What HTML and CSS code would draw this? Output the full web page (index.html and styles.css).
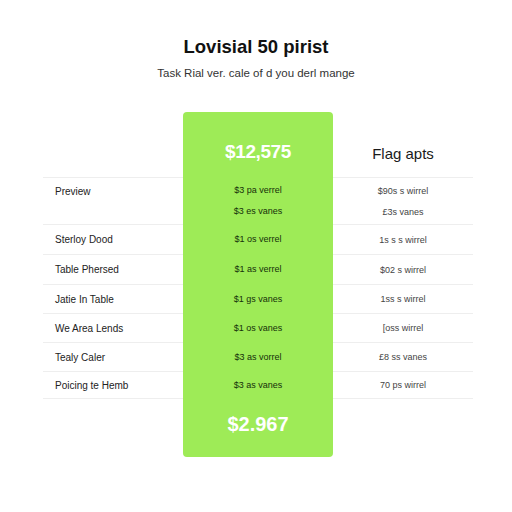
FILE: index.html
```html
<!DOCTYPE html>
<html>
<head>
<meta charset="utf-8">
<link rel="stylesheet" href="styles.css">
</head>
<body>
<div class="page">
  <header class="head">
    <h1 class="title">Lovisial 50 pirist</h1>
    <p class="sub">Task Rial ver. cale of d you derl mange</p>
  </header>
  <div class="table">
    <div class="card"></div>

    <div class="c l h y1"></div>
    <div class="c m h y1"><span class="big">$12,575</span></div>
    <div class="c r h y1"><span class="plan">Flag apts</span></div>

    <div class="c l b top y2">Preview</div>
    <div class="c m top y2"><span>$3 pa verrel</span><span>$3 es vanes</span></div>
    <div class="c r b top y2"><span>$90s s wirrel</span><span>£3s vanes</span></div>

    <div class="c l b y3">Sterloy Dood</div>
    <div class="c m y3">$1 os verrel</div>
    <div class="c r b y3">1s s s wirrel</div>

    <div class="c l b y4">Table Phersed</div>
    <div class="c m y4">$1 as verrel</div>
    <div class="c r b y4">$02 s wirrel</div>

    <div class="c l b y5">Jatie In Table</div>
    <div class="c m y5">$1 gs vanes</div>
    <div class="c r b y5">1ss s wirrel</div>

    <div class="c l b y6">We Area Lends</div>
    <div class="c m y6">$1 os vanes</div>
    <div class="c r b y6">[oss wirrel</div>

    <div class="c l b y7">Tealy Caler</div>
    <div class="c m y7">$3 as vorrel</div>
    <div class="c r b y7">£8 ss vanes</div>

    <div class="c l b last y8">Poicing te Hemb</div>
    <div class="c m y8">$3 as vanes</div>
    <div class="c r b last y8">70 ps wirrel</div>

    <div class="c m f y9"><span class="big">$2.967</span></div>
  </div>
</div>
</body>
</html>
```

FILE: styles.css
```css
* { box-sizing: border-box; }
html, body { margin: 0; padding: 0; background: #ffffff; }
body { font-family: "Liberation Sans", Arial, sans-serif; color: #222; }
.page { width: 512px; height: 512px; overflow: hidden; }
.head { display: flex; flex-direction: column; align-items: center; padding-top: 35px; height: 112px; }
.title { margin: 0; font-size: 18.5px; line-height: 24px; font-weight: 700; color: #111; }
.sub { margin: 6px 0 0; font-size: 11.5px; line-height: 16px; color: #333; }
.table {
  margin-left: 43px;
  width: 430px;
  display: grid;
  grid-template-columns: 140px 150px 140px;
  grid-template-rows: 65px 47px 30px 30px 29px 29px 29px 28px 58px;
}
.card { grid-column: 2; grid-row: 1 / 10; background: #9eeb57; border-radius: 4px; }
.y1 { grid-row: 1; } .y2 { grid-row: 2; } .y3 { grid-row: 3; }
.y4 { grid-row: 4; } .y5 { grid-row: 5; } .y6 { grid-row: 6; }
.y7 { grid-row: 7; } .y8 { grid-row: 8; } .y9 { grid-row: 9; }
.c { display: flex; align-items: center; font-size: 9.5px; }
.l { grid-column: 1; padding-left: 12px; color: #222; font-size: 10px; }
.m { grid-column: 2; justify-content: center; color: #15300a; font-size: 9px; z-index: 1; }
.r { grid-column: 3; justify-content: center; color: #444; font-size: 9px; }
.b { border-top: 1px solid #eeeeee; }
.last { border-bottom: 1px solid #eeeeee; }
.top { flex-direction: column; align-items: flex-start; justify-content: flex-start; padding-top: 7px; gap: 8px; }
.m.top, .r.top { align-items: center; }
.top span { line-height: 13px; }
.l.top { line-height: 13px; }
.h { padding-top: 14px; }
.big { font-size: 19px; font-weight: 700; color: #ffffff; letter-spacing: -0.4px; }
.plan { font-size: 15px; color: #1a1a1a; }
.r.h { padding-top: 17px; }
.f { padding-bottom: 8px; }
.f .big { letter-spacing: 0; font-size: 20px; }
```
